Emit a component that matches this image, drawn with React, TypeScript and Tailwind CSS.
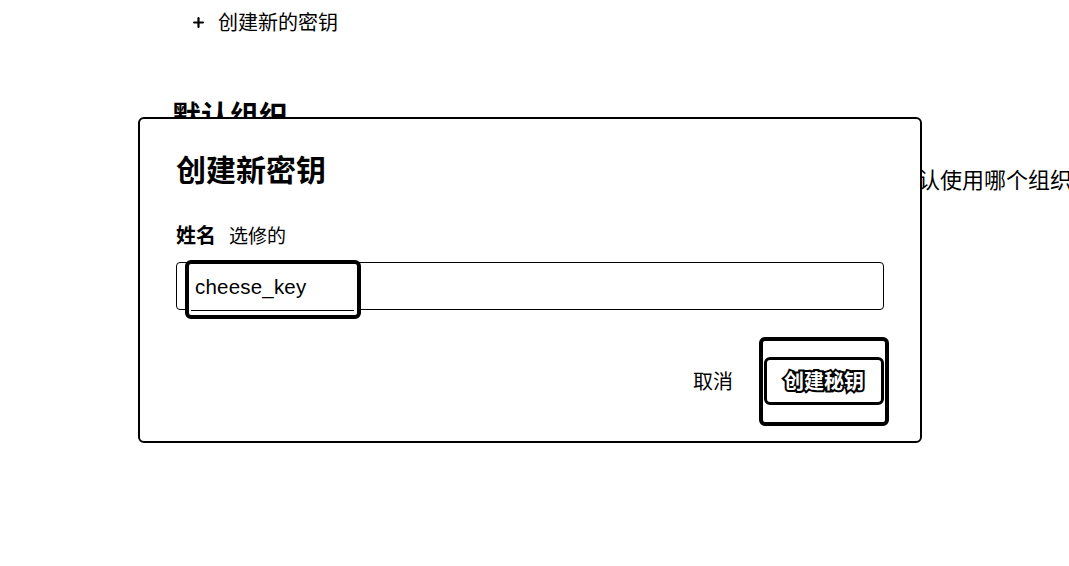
import { Plus } from "lucide-react";

const cjk = "font-['Noto_Sans_CJK_SC','Noto_Sans',sans-serif]";

export default function App() {
  return (
    <div className={`relative w-full h-[566px] overflow-hidden bg-white text-black ${cjk}`}>
      {/* 背景页面 */}
      <div className="pt-[8px]">
        <div className="flex items-center h-[28px] pl-[191px] gap-[12px]">
          <Plus className="w-[15px] h-[15px]" strokeWidth={3.5} />
          <span className="text-[20px] leading-[28px]">创建新的密钥</span>
        </div>
        <h2 className="mt-[60px] pl-[172px] text-[29px] leading-[36px] font-bold">默认组织</h2>
        <p className="mt-[32px] pl-[896px] text-[22px] leading-[28px] whitespace-nowrap">默认使用哪个组织</p>
      </div>

      {/* 弹窗 */}
      <div className="absolute left-[138px] top-[117px] w-[784px] border-2 border-black rounded-md bg-white px-[36px] pt-[31px] pb-[36px]">
        <h1 className="text-[30px] leading-[36px] font-bold">创建新密钥</h1>

        <div className="mt-[35px] flex items-center gap-[13px] h-[28px]">
          <span className="text-[20px] font-bold">姓名</span>
          <span className="text-[19px]">选修的</span>
        </div>

        <div className="relative mt-[13px] h-[48px] border border-black rounded">
          <div className="absolute left-[8px] top-[-3px] w-[176px] h-[59px] border-4 border-black rounded-md bg-white">
            <span className="absolute left-[6px] top-[9px] text-[20.5px] leading-[28px] font-['Liberation_Sans',sans-serif] tracking-[0.2px]">cheese_key</span>
            <div className="absolute left-[2px] right-[3px] top-[46px] border-t border-black" />
          </div>
        </div>

        <div className="mt-[47px] flex items-center justify-end gap-[31px]">
          <button className="text-[20px] leading-[28px]">取消</button>
          <div className="relative">
            <div className="absolute -left-[5px] -right-[5px] -top-[20px] -bottom-[21px] border-4 border-black rounded-md" />
            <button className="relative w-[120px] h-[48px] border-[3px] border-black rounded-md bg-white flex items-center justify-center">
              <span className="text-[20px] leading-[28px] font-bold text-white [-webkit-text-stroke:4px_black] [paint-order:stroke_fill]">创建秘钥</span>
            </button>
          </div>
        </div>
      </div>
    </div>
  );
}
